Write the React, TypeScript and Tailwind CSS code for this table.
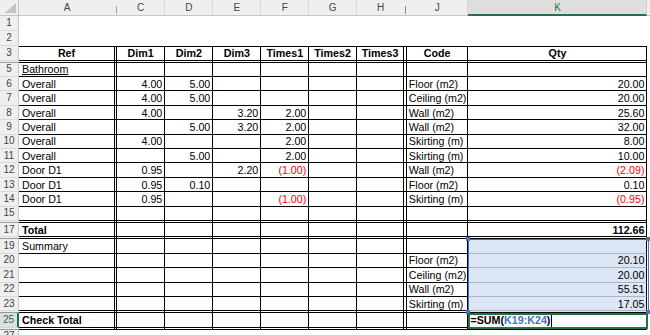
import React from "react"

const COLS = ["A", "B", "C", "D", "E", "F", "G", "H", "I", "J", "K", "L"] as const
type Col = (typeof COLS)[number]

type Cell = {
  v: string
  align?: "l" | "r" | "c"
  bold?: boolean
  red?: boolean
  underline?: boolean
}

type Row = {
  n: string
  h: string
  kind: "plain" | "table" | "hidden"
  cells?: Partial<Record<Col, Cell>>
}

// same template for every row so the columns line up
const GRID =
  "grid grid-cols-[19px_96px_2px_48.3px_48px_48px_48px_47.5px_47.5px_2.5px_61.7px_179px_1fr]"

const txt = (v: string, extra: Partial<Cell> = {}): Cell => ({ v, align: "l", ...extra })
const num = (v: string, extra: Partial<Cell> = {}): Cell => ({ v, align: "r", ...extra })
const neg = (v: string): Cell => ({ v, align: "r", red: true })
const head = (v: string): Cell => ({ v, align: "c", bold: true })

const HIDDEN: Row = { n: "", h: "h-[2px]", kind: "hidden" }
const R = "h-[14.4px]"

const rows: Row[] = [
  { n: "1", h: "h-[15px]", kind: "plain" },
  { n: "2", h: "h-[15px]", kind: "plain" },
  {
    n: "3",
    h: "h-[14.7px]",
    kind: "table",
    cells: {
      A: head("Ref"),
      C: head("Dim1"),
      D: head("Dim2"),
      E: head("Dim3"),
      F: head("Times1"),
      G: head("Times2"),
      H: head("Times3"),
      J: head("Code"),
      K: head("Qty"),
    },
  },
  HIDDEN,
  { n: "5", h: R, kind: "table", cells: { A: txt("Bathroom", { underline: true }) } },
  { n: "6", h: R, kind: "table", cells: { A: txt("Overall"), C: num("4.00"), D: num("5.00"), J: txt("Floor (m2)"), K: num("20.00") } },
  { n: "7", h: R, kind: "table", cells: { A: txt("Overall"), C: num("4.00"), D: num("5.00"), J: txt("Ceiling (m2)"), K: num("20.00") } },
  { n: "8", h: R, kind: "table", cells: { A: txt("Overall"), C: num("4.00"), E: num("3.20"), F: num("2.00"), J: txt("Wall (m2)"), K: num("25.60") } },
  { n: "9", h: R, kind: "table", cells: { A: txt("Overall"), D: num("5.00"), E: num("3.20"), F: num("2.00"), J: txt("Wall (m2)"), K: num("32.00") } },
  { n: "10", h: R, kind: "table", cells: { A: txt("Overall"), C: num("4.00"), F: num("2.00"), J: txt("Skirting (m)"), K: num("8.00") } },
  { n: "11", h: R, kind: "table", cells: { A: txt("Overall"), D: num("5.00"), F: num("2.00"), J: txt("Skirting (m)"), K: num("10.00") } },
  { n: "12", h: R, kind: "table", cells: { A: txt("Door D1"), C: num("0.95"), E: num("2.20"), F: neg("(1.00)"), J: txt("Wall (m2)"), K: neg("(2.09)") } },
  { n: "13", h: R, kind: "table", cells: { A: txt("Door D1"), C: num("0.95"), D: num("0.10"), J: txt("Floor (m2)"), K: num("0.10") } },
  { n: "14", h: R, kind: "table", cells: { A: txt("Door D1"), C: num("0.95"), F: neg("(1.00)"), J: txt("Skirting (m)"), K: neg("(0.95)") } },
  { n: "15", h: R, kind: "table" },
  HIDDEN,
  { n: "17", h: R, kind: "table", cells: { A: txt("Total", { bold: true }), K: num("112.66", { bold: true }) } },
  HIDDEN,
  { n: "19", h: R, kind: "table", cells: { A: txt("Summary") } },
  { n: "20", h: R, kind: "table", cells: { J: txt("Floor (m2)"), K: num("20.10") } },
  { n: "21", h: R, kind: "table", cells: { J: txt("Ceiling (m2)"), K: num("20.00") } },
  { n: "22", h: R, kind: "table", cells: { J: txt("Wall (m2)"), K: num("55.51") } },
  { n: "23", h: R, kind: "table", cells: { J: txt("Skirting (m)"), K: num("17.05") } },
  HIDDEN,
  { n: "25", h: R, kind: "table", cells: { A: txt("Check Total", { bold: true }) } },
  HIDDEN,
  { n: "27", h: R, kind: "plain" },
]

// rows whose K cell sits inside the referenced range K19:K24
const inRange = (idx: number) => idx >= 19 && idx <= 24

function ColumnHeader() {
  return (
    <div className={`${GRID} h-[16px] text-[10px] text-[#444]`}>
      <div className="relative bg-[#efefef] border-r border-b border-r-[#c6c6c6] border-b-[#c6c6c6]">
        <svg className="absolute right-[2px] bottom-[2px]" width="11" height="10" viewBox="0 0 11 10">
          <polygon points="11,0 11,10 0,10" fill="#c4c4c4" />
        </svg>
      </div>
      {COLS.map((c) => {
        if (c === "B" || c === "I") {
          return (
            <div key={c} className="flex items-end justify-center bg-[#efefef] border-b border-b-[#c6c6c6] pb-[1px]">
              <div className={`w-px h-[8px] ${c === "B" ? "bg-[#b39a84]" : "bg-[#8a8a8a]"}`} />
            </div>
          )
        }
        if (c === "K") {
          return (
            <div key={c} className="flex items-end justify-center leading-none bg-[#dedede] text-[#217346] border-r border-r-[#d0d0d0] border-b-2 border-b-[#217346] pb-[1px]">
              K
            </div>
          )
        }
        const noRight = c === "A" || c === "H" || c === "L"
        return (
          <div
            key={c}
            className={`flex items-end justify-center leading-none bg-[#efefef] border-b border-b-[#c6c6c6] pb-[2px] ${noRight ? "" : "border-r border-r-[#d9d9d9]"}`}
          >
            {c === "L" ? "" : c}
          </div>
        )
      })}
    </div>
  )
}

function RowHeader({ n, hidden }: { n: string; hidden: boolean }) {
  if (n === "25") {
    return (
      <div className="flex items-center justify-center leading-none text-[10px] bg-[#dedede] text-[#217346] border-r-2 border-r-[#217346] border-b border-b-[#d6d6d6]">
        {n}
      </div>
    )
  }
  return (
    <div
      className={`flex items-center justify-center leading-none text-[10px] text-[#444] bg-[#efefef] border-r border-r-[#c6c6c6] border-b ${hidden ? "border-b-[#9a9a9a]" : "border-b-[#dadada]"}`}
    >
      {n}
    </div>
  )
}

function SheetRow({ row, idx }: { row: Row; idx: number }) {
  const bordered = row.kind !== "plain"
  return (
    <div className={`${GRID} ${row.h}`}>
      <RowHeader n={row.n} hidden={row.kind === "hidden"} />
      {COLS.map((c) => {
        const cell = row.cells?.[c]
        const ranged = c === "K" && inRange(idx)
        let cls = "flex items-end leading-none pb-[1px] overflow-hidden whitespace-nowrap"
        if (bordered && c !== "L") {
          cls += " border-r border-b border-r-black"
          cls += ranged && idx < 24 ? " border-b-[#aab6c8]" : " border-b-black"
          if (row.n === "3") cls += " border-t border-t-black"
        }
        if (ranged) cls += " bg-[#dce6f4]"
        if (cell) {
          if (cell.align === "r") cls += " justify-end pr-[2px]"
          else if (cell.align === "c") cls += " justify-center"
          else cls += c === "A" ? " pl-[3px]" : " pl-[2px]"
          if (cell.bold) cls += " font-bold"
          if (cell.red) cls += " text-[#ff0000]"
          if (cell.underline) cls += " underline underline-offset-[1px]"
        }
        return (
          <div key={c} className={cls}>
            {cell?.v}
          </div>
        )
      })}
    </div>
  )
}

export default function App() {
  // index counter that matches excel row numbers for the range test
  const numbered = rows.map((r, i) => {
    if (r.n) return Number(r.n)
    const prev = rows[i - 1]
    return prev ? Number(prev.n) + 1 : 0
  })

  return (
    <div className="relative w-[650px] h-[335px] overflow-hidden bg-white text-black text-[10.7px] font-['Liberation_Sans',Arial,sans-serif]">
      <ColumnHeader />
      {rows.map((r, i) => (
        <SheetRow key={i} row={r} idx={numbered[i]} />
      ))}

      {/* referenced range K19:K24 */}
      <div className="absolute left-[467.5px] top-[238.5px] w-[181px] h-[75px] border border-[#4472c4]" />
      <div className="absolute left-[466px] top-[237px] w-[4px] h-[4px] bg-[#4472c4]" />
      <div className="absolute left-[646px] top-[237px] w-[4px] h-[4px] bg-[#4472c4]" />
      <div className="absolute left-[466px] top-[310px] w-[4px] h-[4px] bg-[#4472c4]" />
      <div className="absolute left-[646px] top-[310px] w-[4px] h-[4px] bg-[#4472c4]" />

      {/* active cell K25 in edit mode */}
      <div className="absolute left-[467.5px] top-[312.5px] w-[180.5px] h-[16.5px] border-2 border-[#217346] bg-white flex items-end leading-none pl-[1px] pb-[1px] font-bold whitespace-nowrap">
        <span>=SUM(</span>
        <span className="text-[#4472c4]">K19:K24</span>
        <span>)</span>
        <span className="ml-[1px] mb-[-1px] w-px h-[12px] bg-black" />
      </div>
    </div>
  )
}
